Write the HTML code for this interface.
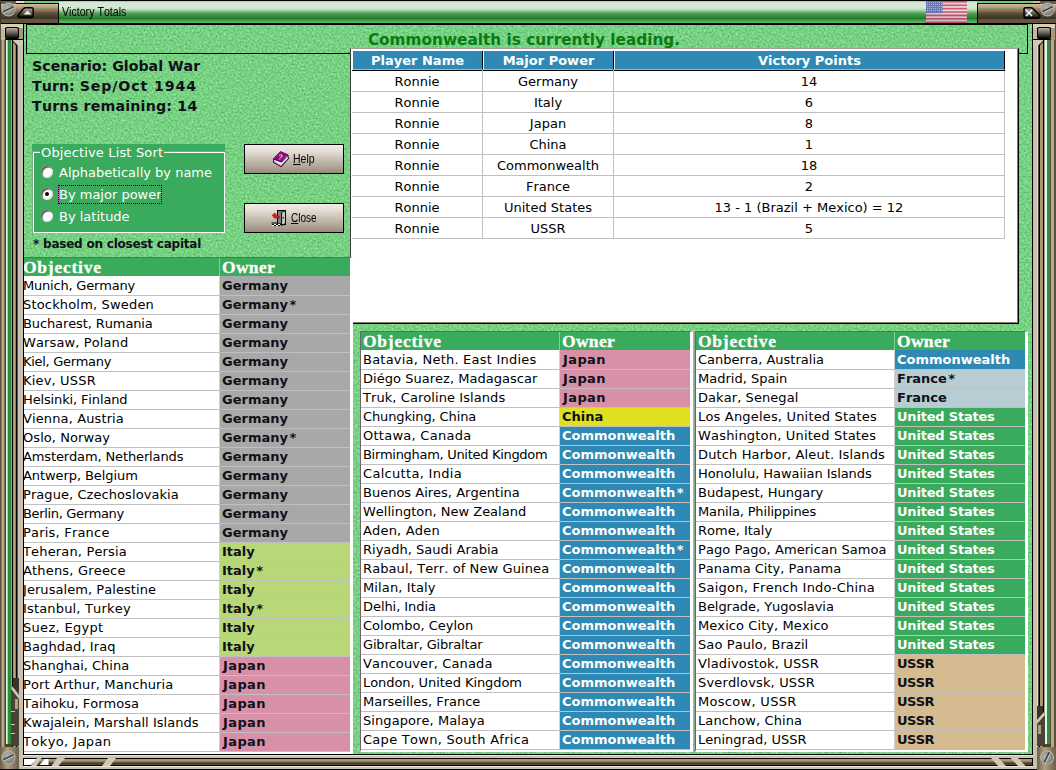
<!DOCTYPE html>
<html lang="en">
<head>
<meta charset="utf-8">
<title>Victory Totals</title>
<style>
html,body{margin:0;padding:0;}
body{width:1056px;height:770px;overflow:hidden;position:relative;background:#74cc80;font-family:"DejaVu Sans","Liberation Sans",sans-serif;font-size:13px;color:#000;font-kerning:none;}
.abs{position:absolute;}
#tex{left:0;top:0;width:1056px;height:770px;}
/* title bar */
#tb{left:0;top:0;width:1056px;height:24px;background:#000;}
#tbg{left:59px;top:1px;width:918px;height:22px;background:linear-gradient(to bottom,#98dca0 0px,#98dca0 1px,#d0e8d0 1px,#d4ead4 7px,#b4dab4 9px,#70b474 11px,#4a9c50 13px,#2e8434 16px,#2a7a2e 17.5px,#3c9a44 19px,#54b45c 21px,#58b860 22px);}
#tbtop{left:16px;top:1px;width:43px;height:2px;background:#6ccf78;}
#tbtop2{left:977px;top:1px;width:56px;height:2px;background:#6ccf78;}
#tbl{left:1px;top:4px;width:57px;height:19px;background:linear-gradient(to bottom,#d8c8b0 0,#c4ae90 1px,#bca688 3px,#94845f 5px,#886e54 7px,#5c523a 9px,#484030 12px,#3c3424 14.5px,#64543c 15.5px,#64543c 19px);}
#tbr{left:978px;top:4px;width:78px;height:19px;background:linear-gradient(to bottom,#d8c8b0 0,#c4ae90 1px,#bca688 3px,#94845f 5px,#886e54 7px,#5c523a 9px,#484030 12px,#3c3424 14.5px,#64543c 15.5px,#64543c 19px);}
#title{left:62px;top:5px;font-family:"Liberation Sans",sans-serif;font-size:12.5px;line-height:14px;color:#000;white-space:nowrap;transform:scaleX(0.85);transform-origin:0 0;}
/* frames */
#fl{left:0;top:24px;width:24px;height:746px;background:linear-gradient(to right,#5a5040 0,#5a5040 1px,#8a7e60 1px,#8a7e60 2px,#b8a888 2px,#b8a888 4px,#7a6e50 4px,#7a6e50 5px,#4a4230 5px,#4a4230 6px,#d8f8e8 6px,#d8f8e8 7px,#90d8a0 7px,#90d8a0 8px,#2e8b3a 8px,#2e8b3a 11px,#a89888 11px,#a89888 12px,#000 12px,#000 13px,#a09070 13px,#a09070 14px,#b8a888 14px,#b8a888 15px,#90805c 15px,#90805c 16px,#000 16px,#000 17px,#60584c 17px,#60584c 18px,#c8c0b0 18px,#c8c0b0 23px,#000 23px,#000 24px);}
#fr{left:1032px;top:24px;width:24px;height:746px;background:linear-gradient(to right,#000 0,#000 1px,#c8c0b0 1px,#c8c0b0 5px,#e8dccc 5px,#e8dccc 6px,#4a4438 6px,#4a4438 7px,#000 7px,#000 8px,#a89870 8px,#a89870 11px,#000 11px,#000 12px,#a0a088 12px,#a0a088 13px,#e0f8e8 13px,#e0f8e8 15px,#2e8b3a 15px,#2e8b3a 18px,#5a5040 18px,#5a5040 19px,#b8a888 19px,#b8a888 22px,#5a5040 22px,#5a5040 24px);}
#fb{left:0;top:754px;width:1056px;height:16px;background:linear-gradient(to bottom,#000 0,#000 1px,#f0e0d8 1px,#f0e0d8 2px,#c8c4b0 2px,#c8c4b0 4px,#000 4px,#000 5px,#a89878 5px,#a89878 7px,#7a6444 8px,#5a4c38 9px,#3c382c 9.5px,#3c382c 10px,#584c3c 10px,#584c3c 11px,#000 11px,#000 12px,#f0e8d8 12px,#f0e8d8 13px,#c8c0b0 13px,#c8c0b0 15px,#000 15px,#000 16px);}
/* top panel */
#tp{left:26px;top:24px;width:1000px;height:28px;border:1px solid #000;}
#lead{left:24px;top:30px;width:1000px;text-align:center;font-weight:bold;font-size:15.3px;line-height:20px;color:#0a7a12;white-space:nowrap;}
.info{left:32px;font-weight:bold;font-size:14.2px;line-height:20px;white-space:nowrap;color:#101018;}
/* fieldset */
#fs{left:32px;top:144px;width:193px;height:89px;background:#3aaa5c;}
#fsb{left:33px;top:152px;width:190px;height:79px;border:1px solid #fff;box-shadow:-1px -1px 0 #7fa88a;}
#leg{left:40px;top:145px;background:#3aaa5c;color:#fff;font-size:13px;letter-spacing:0.15px;line-height:16px;padding:0 1px;white-space:nowrap;}
.rb{left:41px;width:12px;height:12px;border-radius:50%;background:#fff;box-shadow:inset 1.5px 1.5px 1px #585858, inset -1px -1px 1px #d8d8d0;}
.rl{left:59px;color:#fff;font-size:13px;line-height:18px;white-space:nowrap;}
#note{left:33px;top:235px;font-weight:bold;font-size:12px;letter-spacing:-0.22px;line-height:18px;white-space:nowrap;color:#101018;}
/* buttons */
.btn{left:244px;width:98px;height:28px;border:1px solid #000;background:linear-gradient(to bottom,#f0ece6 0,#e4ded6 6px,#d0c8bc 12px,#bcb2a4 18px,#a89c8c 24px,#968a7a 28px);font-family:"Liberation Sans",sans-serif;font-size:12px;}
.btn span{position:absolute;line-height:14px;white-space:nowrap;}
.btn u{text-decoration:underline;}
/* white panel */
#wp{left:350px;top:48px;width:669px;height:276px;background:#fff;border-top:1px solid #a0a0a0;border-left:1px solid #403840;border-right:1px solid #000;border-bottom:1px solid #000;box-sizing:border-box;box-shadow:inset -1px -1px 0 #8a7868;}
.th{top:51px;height:18px;background:#2e8ab4;color:#fff;font-weight:bold;font-size:13px;line-height:20px;text-align:center;border-right:1px solid #000;border-bottom:1px solid #c4acac;white-space:nowrap;}
.tr{position:absolute;left:352px;width:652px;height:20px;border-bottom:1px solid #c0c0c0;border-right:1px solid #c0c0c0;font-size:13px;line-height:22px;white-space:nowrap;}
.tr span{position:absolute;top:-1px;height:21px;line-height:24px;text-align:center;}
.c1{left:0px;width:130px;border-right:1px solid #c0c0c0;}
.c2{left:131px;width:130px;border-right:1px solid #c0c0c0;}
.c3{left:262px;width:390px;}
/* lists */
.list{background:#fff;overflow:hidden;box-sizing:content-box;width:329px;border-top:1px solid #6c6470;border-left:1px solid #6c6470;border-right:3px solid #fff;border-bottom:2px solid #fff;}
.lh{position:relative;height:18px;background:#3aaa5c;color:#fff;font-family:"Liberation Serif",serif;font-weight:bold;font-size:17.5px;letter-spacing:0.75px;line-height:18px;white-space:nowrap;-webkit-text-stroke:0.3px #fff;}
.lh span{position:absolute;top:0;}
.r{position:relative;height:18px;border-bottom:1px solid #c0c0c0;line-height:18px;white-space:nowrap;}
.r span{position:absolute;top:0;height:18px;}
.lh + .r{height:19px;}
.lh + .r span{height:19px;padding-top:1px;box-sizing:border-box;}
.o{left:2px;}
.w{left:198px;width:131px;font-weight:bold;font-size:13px;padding-left:2px;box-sizing:border-box;border-left:1px solid #d0d0d0;}
.hw{left:198px;padding-left:2px;letter-spacing:0.3px;border-left:1px solid #86cf98;height:18px;}
.ge{background:#a8a8a8;color:#101018;}
.it{background:#b8d878;color:#101018;}
.ja{background:#d890a8;color:#101018;letter-spacing:0.4px;text-indent:1px;}
.ch{background:#e0e020;color:#101018;}
.cw{background:#2e8ab4;color:#fff;}
.fr{background:#b8ccd4;color:#101018;}
.us{background:#3aaa5c;color:#fff;letter-spacing:-0.2px;}
.su{background:#d4bc90;color:#101018;letter-spacing:-0.6px;}
.w i{font-style:normal;margin-left:1.5px;}
#l1{left:20px;top:257px;height:494px;}
#lp{left:353px;top:324px;width:679px;height:430px;}
#l2{left:360px;top:331px;height:418px;}
#l3{left:695px;top:331px;height:418px;box-shadow:-1px 0 0 #8aa890;}
</style>
</head>
<body>
<svg id="tex" class="abs" width="1056" height="770">
<defs>
<filter id="nz" x="0" y="0" width="100%" height="100%" color-interpolation-filters="sRGB">
<feTurbulence type="fractalNoise" baseFrequency="0.5" numOctaves="3" seed="7" result="n"/>
<feColorMatrix type="matrix" values="0.42 0 0 0 0.255  0.32 0 0 0 0.66  0.40 0 0 0 0.31  0 0 0 0 1"/>
</filter>
</defs>
<rect width="1056" height="770" fill="#74cc80"/>
<rect width="1056" height="770" fill="#fff" filter="url(#nz)"/>
</svg>

<!-- top panel -->
<div id="tp" class="abs"></div>
<div id="lead" class="abs">Commonwealth is currently leading.</div>

<div class="abs info" style="top:56px">Scenario: Global War</div>
<div class="abs info" style="top:76px;letter-spacing:0.85px"><b style="letter-spacing:0.05px">Turn: </b>Sep/Oct 1944</div>
<div class="abs info" style="top:96px;letter-spacing:0.2px">Turns remaining: 14</div>

<div id="fs" class="abs"></div>
<div id="fsb" class="abs"></div>
<div id="leg" class="abs">Objective List Sort</div>
<div class="abs rb" style="top:166px"></div>
<div class="abs rb" style="top:188px"><i style="position:absolute;left:4px;top:4px;width:4px;height:4px;border-radius:50%;background:#000"></i></div>
<div class="abs rb" style="top:210px"></div>
<div class="abs rl" style="top:164px">Alphabetically by name</div>
<div class="abs rl" style="top:186px">By major power</div>
<div class="abs" style="left:58px;top:185px;width:102px;height:17px;border:1px solid #c850a8"></div>
<div class="abs" style="left:58px;top:185px;width:102px;height:17px;border:1px dotted #100010"></div>
<div class="abs rl" style="top:208px">By latitude</div>
<div id="note" class="abs">* based on closest capital</div>

<div class="abs btn" style="top:144px"><span style="left:48px;top:7px;font-size:12.5px;transform:scaleX(0.84);transform-origin:0 0"><u>H</u>elp</span>
<svg class="abs" style="left:28px;top:6px" width="17" height="17" viewBox="0 0 17 17">
<path d="M7.5 0.8 L14.6 3.8 L15.6 7.4 L8 15.6 L0.6 11.2 L0.6 8.2 Z" fill="#fff" stroke="#3a0040" stroke-width="1.1" stroke-linejoin="round"/>
<path d="M7.5 0.8 L14.6 3.8 L8.6 11.2 L0.6 8.2 Z" fill="#8a0a8c"/>
<path d="M0.6 8.2 L8.6 11.2 L15.2 4.4" fill="none" stroke="#3a0040" stroke-width="0.9"/>
<path d="M1.2 10.6 L8.2 14.2 L15 7.2" fill="none" stroke="#9a9aa8" stroke-width="0.8"/>
<text x="5.2" y="8.6" font-family="Liberation Sans, sans-serif" font-size="7.5" font-weight="bold" fill="#ffe400" transform="rotate(14 7 6)">?</text>
</svg></div>
<div class="abs btn" style="top:203px"><span style="left:46px;top:7px;font-size:12.5px;transform:scaleX(0.8);transform-origin:0 0"><u>C</u>lose</span>
<svg class="abs" style="left:26px;top:6px" width="17" height="17" viewBox="0 0 17 17">
<rect x="6.5" y="0.5" width="8" height="13.5" fill="#808080" stroke="#000" stroke-width="1"/>
<path d="M10.5 2.4 L14.5 0.6 L14.5 13.6 L10.5 15.4 Z" fill="#c4c4c4" stroke="#000" stroke-width="0.9" stroke-linejoin="round"/>
<rect x="11.6" y="7" width="1" height="1.6" fill="#000"/>
<path d="M1.2 5.2 L4 3 L4.6 4.6 L8.6 6.4 L8.2 8 L3.2 8 L2.6 7 Z" fill="#f01020" stroke="#900010" stroke-width="0.5"/>
<path d="M0.5 13 H7" stroke="#000" stroke-width="1"/>
<path d="M1 14.5 H3 M5 14.5 H7 M9 14.5 H11 M3 15.6 H5 M7 15.6 H9 M11 14.6 H15" stroke="#000" stroke-width="1"/>
<path d="M3 14.5 H5 M7 14.5 H9 M1 15.6 H3 M5 15.6 H7" stroke="#fff" stroke-width="1"/>
</svg></div>

<!-- white panel with table -->
<div id="wp" class="abs"></div>
<div class="abs" style="left:351px;top:322px;width:2px;height:2px;background:#fff"></div>
<div class="abs th" style="left:353px;width:129px">Player Name</div>
<div class="abs th" style="left:483px;width:129px;border-left:1px solid #eef4f8">Major Power</div>
<div class="abs th" style="left:614px;width:389px;border-left:1px solid #eef4f8">Victory Points</div>
<div class="abs" style="left:352px;top:70px;width:653px;height:1px;background:#000"></div>
<div id="vp">
<div class="tr" style="top:71px"><span class="c1">Ronnie</span><span class="c2">Germany</span><span class="c3">14</span></div>
<div class="tr" style="top:92px"><span class="c1">Ronnie</span><span class="c2">Italy</span><span class="c3">6</span></div>
<div class="tr" style="top:113px"><span class="c1">Ronnie</span><span class="c2">Japan</span><span class="c3">8</span></div>
<div class="tr" style="top:134px"><span class="c1">Ronnie</span><span class="c2">China</span><span class="c3">1</span></div>
<div class="tr" style="top:155px"><span class="c1">Ronnie</span><span class="c2">Commonwealth</span><span class="c3">18</span></div>
<div class="tr" style="top:176px"><span class="c1">Ronnie</span><span class="c2">France</span><span class="c3">2</span></div>
<div class="tr" style="top:197px"><span class="c1">Ronnie</span><span class="c2">United States</span><span class="c3">13 - 1 (Brazil + Mexico) = 12</span></div>
<div class="tr" style="top:218px"><span class="c1">Ronnie</span><span class="c2">USSR</span><span class="c3">5</span></div>
</div>

<!-- left list -->
<div id="l1" class="abs list">
<div class="lh"><span style="left:2px">Objective</span><span class="hw">Owner</span></div>
<div class="r"><span class="o" style="letter-spacing:-0.20px">Munich, Germany</span><span class="w ge">Germany</span></div>
<div class="r"><span class="o" style="letter-spacing:0.17px">Stockholm, Sweden</span><span class="w ge">Germany<i>*</i></span></div>
<div class="r"><span class="o" style="letter-spacing:-0.11px">Bucharest, Rumania</span><span class="w ge">Germany</span></div>
<div class="r"><span class="o" style="letter-spacing:0.12px">Warsaw, Poland</span><span class="w ge">Germany</span></div>
<div class="r"><span class="o" style="letter-spacing:-0.30px">Kiel, Germany</span><span class="w ge">Germany</span></div>
<div class="r"><span class="o" style="letter-spacing:0.17px">Kiev, USSR</span><span class="w ge">Germany</span></div>
<div class="r"><span class="o" style="letter-spacing:-0.14px">Helsinki, Finland</span><span class="w ge">Germany</span></div>
<div class="r"><span class="o" style="letter-spacing:0.12px">Vienna, Austria</span><span class="w ge">Germany</span></div>
<div class="r"><span class="o" style="letter-spacing:0.07px">Oslo, Norway</span><span class="w ge">Germany<i>*</i></span></div>
<div class="r"><span class="o" style="letter-spacing:-0.13px">Amsterdam, Netherlands</span><span class="w ge">Germany</span></div>
<div class="r"><span class="o" style="letter-spacing:-0.08px">Antwerp, Belgium</span><span class="w ge">Germany</span></div>
<div class="r"><span class="o" style="letter-spacing:0.07px">Prague, Czechoslovakia</span><span class="w ge">Germany</span></div>
<div class="r"><span class="o" style="letter-spacing:-0.34px">Berlin, Germany</span><span class="w ge">Germany</span></div>
<div class="r"><span class="o" style="letter-spacing:0.20px">Paris, France</span><span class="w ge">Germany</span></div>
<div class="r"><span class="o" style="letter-spacing:0.16px">Teheran, Persia</span><span class="w it">Italy</span></div>
<div class="r"><span class="o" style="letter-spacing:0.18px">Athens, Greece</span><span class="w it">Italy<i>*</i></span></div>
<div class="r"><span class="o" style="letter-spacing:0.06px">Jerusalem, Palestine</span><span class="w it">Italy</span></div>
<div class="r"><span class="o" style="letter-spacing:0.17px">Istanbul, Turkey</span><span class="w it">Italy<i>*</i></span></div>
<div class="r"><span class="o" style="letter-spacing:0.31px">Suez, Egypt</span><span class="w it">Italy</span></div>
<div class="r"><span class="o" style="letter-spacing:0.08px">Baghdad, Iraq</span><span class="w it">Italy</span></div>
<div class="r"><span class="o">Shanghai, China</span><span class="w ja">Japan</span></div>
<div class="r"><span class="o" style="letter-spacing:0.12px">Port Arthur, Manchuria</span><span class="w ja">Japan</span></div>
<div class="r"><span class="o">Taihoku, Formosa</span><span class="w ja">Japan</span></div>
<div class="r"><span class="o" style="letter-spacing:0.03px">Kwajalein, Marshall Islands</span><span class="w ja">Japan</span></div>
<div class="r"><span class="o" style="letter-spacing:0.41px">Tokyo, Japan</span><span class="w ja">Japan</span></div>
</div>

<!-- lower panel -->
<div id="lp" class="abs"></div>
<div id="l2" class="abs list">
<div class="lh"><span style="left:2px">Objective</span><span class="hw">Owner</span></div>
<div class="r"><span class="o" style="letter-spacing:0.22px">Batavia, Neth. East Indies</span><span class="w ja">Japan</span></div>
<div class="r"><span class="o" style="letter-spacing:0.03px">Diégo Suarez, Madagascar</span><span class="w ja">Japan</span></div>
<div class="r"><span class="o" style="letter-spacing:0.07px">Truk, Caroline Islands</span><span class="w ja">Japan</span></div>
<div class="r"><span class="o" style="letter-spacing:-0.12px">Chungking, China</span><span class="w ch">China</span></div>
<div class="r"><span class="o" style="letter-spacing:0.26px">Ottawa, Canada</span><span class="w cw">Commonwealth</span></div>
<div class="r"><span class="o" style="letter-spacing:-0.30px">Birmingham, United Kingdom</span><span class="w cw">Commonwealth</span></div>
<div class="r"><span class="o" style="letter-spacing:0.31px">Calcutta, India</span><span class="w cw">Commonwealth</span></div>
<div class="r"><span class="o">Buenos Aires, Argentina</span><span class="w cw">Commonwealth<i>*</i></span></div>
<div class="r"><span class="o">Wellington, New Zealand</span><span class="w cw">Commonwealth</span></div>
<div class="r"><span class="o" style="letter-spacing:0.18px">Aden, Aden</span><span class="w cw">Commonwealth</span></div>
<div class="r"><span class="o">Riyadh, Saudi Arabia</span><span class="w cw">Commonwealth<i>*</i></span></div>
<div class="r"><span class="o" style="letter-spacing:0.10px">Rabaul, Terr. of New Guinea</span><span class="w cw">Commonwealth</span></div>
<div class="r"><span class="o" style="letter-spacing:0.13px">Milan, Italy</span><span class="w cw">Commonwealth</span></div>
<div class="r"><span class="o" style="letter-spacing:-0.06px">Delhi, India</span><span class="w cw">Commonwealth</span></div>
<div class="r"><span class="o">Colombo, Ceylon</span><span class="w cw">Commonwealth</span></div>
<div class="r"><span class="o" style="letter-spacing:-0.17px">Gibraltar, Gibraltar</span><span class="w cw">Commonwealth</span></div>
<div class="r"><span class="o" style="letter-spacing:0.14px">Vancouver, Canada</span><span class="w cw">Commonwealth</span></div>
<div class="r"><span class="o" style="letter-spacing:-0.07px">London, United Kingdom</span><span class="w cw">Commonwealth</span></div>
<div class="r"><span class="o">Marseilles, France</span><span class="w cw">Commonwealth</span></div>
<div class="r"><span class="o" style="letter-spacing:0.07px">Singapore, Malaya</span><span class="w cw">Commonwealth</span></div>
<div class="r"><span class="o" style="letter-spacing:0.28px">Cape Town, South Africa</span><span class="w cw">Commonwealth</span></div>
</div>
<div id="l3" class="abs list">
<div class="lh"><span style="left:2px">Objective</span><span class="hw">Owner</span></div>
<div class="r"><span class="o">Canberra, Australia</span><span class="w cw">Commonwealth</span></div>
<div class="r"><span class="o">Madrid, Spain</span><span class="w fr">France<i>*</i></span></div>
<div class="r"><span class="o" style="letter-spacing:0.07px">Dakar, Senegal</span><span class="w fr">France</span></div>
<div class="r"><span class="o" style="letter-spacing:0.18px">Los Angeles, United States</span><span class="w us">United States</span></div>
<div class="r"><span class="o" style="letter-spacing:0.19px">Washington, United States</span><span class="w us">United States</span></div>
<div class="r"><span class="o" style="letter-spacing:0.13px">Dutch Harbor, Aleut. Islands</span><span class="w us">United States</span></div>
<div class="r"><span class="o" style="letter-spacing:-0.06px">Honolulu, Hawaiian Islands</span><span class="w us">United States</span></div>
<div class="r"><span class="o">Budapest, Hungary</span><span class="w us">United States</span></div>
<div class="r"><span class="o" style="letter-spacing:-0.15px">Manila, Philippines</span><span class="w us">United States</span></div>
<div class="r"><span class="o">Rome, Italy</span><span class="w us">United States</span></div>
<div class="r"><span class="o" style="letter-spacing:0.05px">Pago Pago, American Samoa</span><span class="w us">United States</span></div>
<div class="r"><span class="o">Panama City, Panama</span><span class="w us">United States</span></div>
<div class="r"><span class="o" style="letter-spacing:0.23px">Saigon, French Indo-China</span><span class="w us">United States</span></div>
<div class="r"><span class="o" style="letter-spacing:-0.04px">Belgrade, Yugoslavia</span><span class="w us">United States</span></div>
<div class="r"><span class="o" style="letter-spacing:0.08px">Mexico City, Mexico</span><span class="w us">United States</span></div>
<div class="r"><span class="o" style="letter-spacing:0.11px">Sao Paulo, Brazil</span><span class="w us">United States</span></div>
<div class="r"><span class="o" style="letter-spacing:0.13px">Vladivostok, USSR</span><span class="w su">USSR</span></div>
<div class="r"><span class="o" style="letter-spacing:0.15px">Sverdlovsk, USSR</span><span class="w su">USSR</span></div>
<div class="r"><span class="o" style="letter-spacing:0.30px">Moscow, USSR</span><span class="w su">USSR</span></div>
<div class="r"><span class="o" style="letter-spacing:0.09px">Lanchow, China</span><span class="w su">USSR</span></div>
<div class="r"><span class="o">Leningrad, USSR</span><span class="w su">USSR</span></div>
</div>

<!-- frame -->
<div id="fl" class="abs"></div>
<div id="fr" class="abs"></div>
<div id="fb" class="abs"></div>
<div id="tb" class="abs"></div>
<div id="tbg" class="abs"></div>
<div id="tbtop" class="abs"></div>
<div id="tbtop2" class="abs"></div>
<div id="tbl" class="abs"></div>
<div id="tbr" class="abs"></div>
<div id="title" class="abs">Victory Totals</div>
<svg id="deco" class="abs" style="left:0;top:0" width="1056" height="770" shape-rendering="auto">
<defs>
<linearGradient id="gbtn" x1="0" y1="0" x2="0" y2="1"><stop offset="0" stop-color="#b8b0a0"/><stop offset="0.45" stop-color="#6a665c"/><stop offset="1" stop-color="#050505"/></linearGradient>

<linearGradient id="gcorner" x1="0" y1="0" x2="1" y2="0"><stop offset="0" stop-color="#6a5e48"/><stop offset="0.4" stop-color="#b0a080"/><stop offset="1" stop-color="#6a5e48"/></linearGradient>
<radialGradient id="gscrew" cx="0.4" cy="0.35" r="0.7"><stop offset="0" stop-color="#b0b4b0"/><stop offset="0.7" stop-color="#8c908c"/><stop offset="1" stop-color="#6c6e6a"/></radialGradient>
<g id="screw"><circle r="7" fill="#c4b49c"/><circle r="6" fill="url(#gscrew)"/><path d="M-5 2.2 L5 -2.6" stroke="#3c4040" stroke-width="1.6"/><path d="M-4.6 3.4 L5.2 -1.3" stroke="#d0d4d0" stroke-width="0.8"/></g>
</defs>
<!-- title bar left: screw + minimise -->
<rect x="0" y="1" width="16" height="3" fill="#6a5c44"/>
<rect x="16" y="1" width="8" height="2" fill="#e8dcc0"/>
<rect x="1040" y="1" width="16" height="3" fill="#6a5c44"/>
<rect x="1033" y="1" width="7" height="2" fill="#c8b8a0"/>
<rect x="0" y="0" width="1" height="24" fill="#3a3428"/>
<use href="#screw" x="8.5" y="9.5"/>
<path d="M18.5 17 Q17 16.5 18.3 15 L23.6 8.6 Q24.4 7.8 25.5 7.8 L31.5 7.8 Q33.2 7.8 33.2 9.5 L33.2 16 Q33.2 17.5 31.8 17.5 L19.5 17.5 Z" fill="url(#gbtn)" stroke="#000" stroke-width="1.5" stroke-linejoin="round"/>
<path d="M23.5 14.5 L27.5 10.5 L31.5 14.5 Z" fill="#f0ead8"/>
<!-- flag -->
<g>
<rect x="926" y="1" width="41" height="22" fill="#e4dce0"/>
<g fill="#d25a70">
<rect x="926" y="1" width="41" height="1.7"/><rect x="926" y="4.4" width="41" height="1.7"/><rect x="926" y="7.8" width="41" height="1.7"/><rect x="926" y="11.2" width="41" height="1.7"/><rect x="926" y="14.6" width="41" height="1.7"/><rect x="926" y="18" width="41" height="1.7"/><rect x="926" y="21.3" width="41" height="1.7"/>
</g>
<rect x="926" y="1" width="16.5" height="12.2" fill="#6878b0"/>
<g fill="#aab4d8">
<rect x="927" y="2" width="1" height="1"/><rect x="929" y="2" width="1" height="1"/><rect x="931" y="2" width="1" height="1"/><rect x="933" y="2" width="1" height="1"/><rect x="935" y="2" width="1" height="1"/><rect x="937" y="2" width="1" height="1"/><rect x="939" y="2" width="1" height="1"/><rect x="941" y="2" width="1" height="1"/>
<rect x="927" y="4" width="1" height="1"/><rect x="929" y="4" width="1" height="1"/><rect x="931" y="4" width="1" height="1"/><rect x="933" y="4" width="1" height="1"/><rect x="935" y="4" width="1" height="1"/><rect x="937" y="4" width="1" height="1"/><rect x="939" y="4" width="1" height="1"/><rect x="941" y="4" width="1" height="1"/>
<rect x="927" y="6" width="1" height="1"/><rect x="929" y="6" width="1" height="1"/><rect x="931" y="6" width="1" height="1"/><rect x="933" y="6" width="1" height="1"/><rect x="935" y="6" width="1" height="1"/><rect x="937" y="6" width="1" height="1"/><rect x="939" y="6" width="1" height="1"/><rect x="941" y="6" width="1" height="1"/>
<rect x="927" y="8" width="1" height="1"/><rect x="929" y="8" width="1" height="1"/><rect x="931" y="8" width="1" height="1"/><rect x="933" y="8" width="1" height="1"/><rect x="935" y="8" width="1" height="1"/><rect x="937" y="8" width="1" height="1"/><rect x="939" y="8" width="1" height="1"/><rect x="941" y="8" width="1" height="1"/>
<rect x="927" y="10" width="1" height="1"/><rect x="929" y="10" width="1" height="1"/><rect x="931" y="10" width="1" height="1"/><rect x="933" y="10" width="1" height="1"/><rect x="935" y="10" width="1" height="1"/><rect x="937" y="10" width="1" height="1"/><rect x="939" y="10" width="1" height="1"/><rect x="941" y="10" width="1" height="1"/>
</g>
<rect x="926" y="14" width="41" height="9" fill="#000" opacity="0.10"/>
</g>
<!-- title bar right: close + screw -->
<path d="M1024 9.2 Q1024 7.8 1025.4 7.8 L1031 7.8 Q1032.2 7.8 1033 8.6 L1039.2 15 Q1040.6 16.6 1039.2 17.6 Q1038.6 18.2 1037.6 18.2 L1025.4 18.2 Q1024 18.2 1024 16.8 Z" fill="url(#gbtn)" stroke="#000" stroke-width="1.5" stroke-linejoin="round"/>
<path d="M1026 10 L1032 16 M1032 10 L1026 16" stroke="#fff" stroke-width="1.5"/>
<use href="#screw" x="1047.5" y="9.5"/>
<!-- left frame top corner -->
<rect x="1" y="24" width="22" height="16" fill="#a89878"/>
<rect x="1" y="24" width="22" height="4" fill="#d8ccb8"/>
<rect x="1" y="28" width="4" height="12" fill="#c4b8a0"/>
<rect x="5" y="27" width="14" height="12" rx="2" fill="#000"/>
<rect x="6" y="28" width="12" height="10" rx="1.5" fill="url(#gbtn)"/>
<rect x="5" y="39" width="19" height="1" fill="#000"/>
<rect x="23" y="24" width="1" height="16" fill="#000"/>
<path d="M13 40 L23 40 L23 46 L18 46 Z" fill="#d0c8b8"/>
<path d="M12.5 41 L17.5 46.5" stroke="#000" stroke-width="1"/>
<!-- right frame top corner -->
<rect x="1033" y="24" width="22" height="16" fill="#a89878"/>
<rect x="1033" y="24" width="22" height="4" fill="#d8ccb8"/>
<rect x="1033" y="28" width="4" height="12" fill="#c4b8a0"/>
<rect x="1037" y="27" width="14" height="12" rx="2" fill="#000"/>
<rect x="1038" y="28" width="12" height="10" rx="1.5" fill="url(#gbtn)"/>
<rect x="1032" y="39" width="19" height="1" fill="#000"/>
<rect x="1032" y="24" width="1" height="16" fill="#000"/>
<path d="M1033 40 L1043 40 L1038 46 L1033 46 Z" fill="#d0c8b8"/>
<path d="M1043.5 41 L1038.5 46.5" stroke="#000" stroke-width="1"/>
<!-- left frame bottom detail -->
<rect x="11" y="690" width="8" height="56" fill="#4a4236"/>
<path d="M13 678 L19 678 L19 692 L13 688 Z" fill="#3a342a"/>
<path d="M12 686 L19 695 L19 699 L12 690 Z" fill="#d0c8b8"/>
<rect x="15" y="699" width="3" height="10" fill="#b0a080"/>
<path d="M11 711.5 h4 M11 724.5 h4 M11 733.5 h4" stroke="#d0c8b8" stroke-width="1"/>
<rect x="5" y="744" width="7" height="3" fill="#4a4230"/>
<rect x="0" y="747" width="19" height="23" fill="url(#gcorner)"/>
<rect x="0" y="769" width="24" height="1" fill="#000"/>
<use href="#screw" x="8.5" y="757.5"/>
<!-- right frame bottom detail -->
<rect x="1037" y="716" width="8" height="30" fill="#4a4236"/>
<path d="M1037 706 L1043 706 L1043 716 L1037 720 Z" fill="#3a342a"/>
<path d="M1037 720 L1044 712 L1044 716 L1037 724 Z" fill="#d0c8b8"/>
<rect x="1038" y="725" width="3" height="9" fill="#b0a080"/>
<rect x="1044" y="744" width="7" height="3" fill="#4a4230"/>
<rect x="1037" y="747" width="19" height="23" fill="url(#gcorner)"/>
<use href="#screw" transform="translate(1047 757.5) rotate(-38)"/>
<!-- bottom channel decorations -->
<rect x="19" y="754" width="4" height="15" fill="#c8c0b0"/>
<rect x="23" y="758" width="1" height="8" fill="#000"/>
<rect x="1032" y="758" width="1" height="8" fill="#000"/>
<rect x="1033" y="754" width="4" height="15" fill="#c8c0b0"/>
<path d="M24 759 L37 759 L31 765 L24 765 Z" fill="#fff"/>
<path d="M37 758 L41.5 758 L36.5 766 L31 766 Z" fill="#d0c8b8"/>
<path d="M45 759 L48.5 759 L48.5 765 L39.5 765 Z" fill="#fff"/>
<path d="M57 758 L65 758 L58.5 766 L51.5 766 Z" fill="#d0c8b8"/>
<path d="M108 758 L116 758 L110 766 L102 766 Z" fill="#d0c8b8"/>
<path d="M991 758 L998.5 758 L1006 766 L998 766 Z" fill="#d0c8b8"/>
<path d="M1010.5 758 L1018 758 L1025.5 766 L1018 766 Z" fill="#d0c8b8"/>
</svg>
</body>
</html>
